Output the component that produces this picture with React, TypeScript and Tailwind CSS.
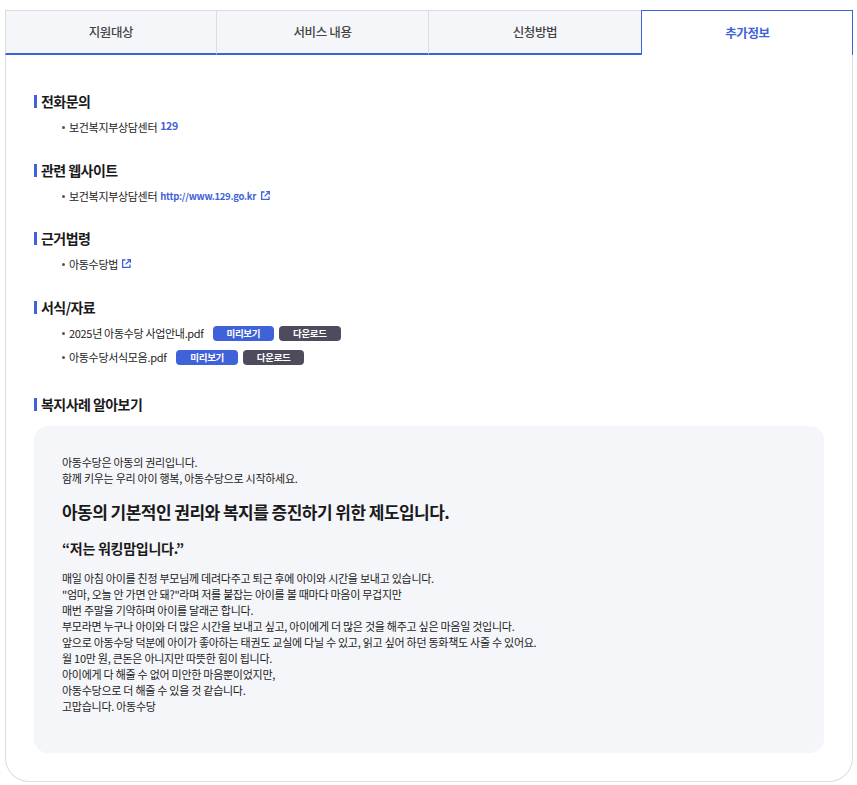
const F = "[font-family:'Noto_Sans_CJK_KR','Noto_Sans',sans-serif]";

function ExtIcon() {
  return (
    <svg width="9" height="9" viewBox="0 0 9 9" fill="none" stroke="#3f62d9" strokeWidth="1.3" className="shrink-0">
      <path d="M3.5 1H.65v7.35H8V5.5" />
      <path d="M3.6 5.4 7.8 1.2" />
      <path d="M5.2.65h3.15V3.8" />
    </svg>
  );
}

function Heading({ children }: { children: React.ReactNode }) {
  return (
    <h3 className="flex items-center gap-[4px] h-[20px] text-[14px] font-semibold tracking-[-0.55px] text-[#1a1a1a]">
      <span className="w-[3px] h-[13px] bg-[#3f62d9]" />
      {children}
    </h3>
  );
}

function Item({ children }: { children: React.ReactNode }) {
  return (
    <li className="flex items-center h-[20px] pl-[28px] text-[11px] tracking-[-0.32px] text-[#222]">
      <span className="w-[3px] h-[3px] rounded-full bg-[#555] mr-[4px] mt-[1px]" />
      {children}
    </li>
  );
}

function Btn({ dark, children }: { dark?: boolean; children: React.ReactNode }) {
  return (
    <span className={`flex items-center justify-center w-[61.5px] h-[15px] rounded-[4px] text-[9.5px] font-semibold tracking-[-0.3px] text-white ${dark ? "bg-[#4d4b5c]" : "bg-[#3f62d9]"}`}>
      {children}
    </span>
  );
}

const story = [
  "매일 아침 아이를 친정 부모님께 데려다주고 퇴근 후에 아이와 시간을 보내고 있습니다.",
  "\"엄마, 오늘 안 가면 안 돼?\"라며 저를 붙잡는 아이를 볼 때마다 마음이 무겁지만",
  "매번 주말을 기약하며 아이를 달래곤 합니다.",
  "부모라면 누구나 아이와 더 많은 시간을 보내고 싶고, 아이에게 더 많은 것을 해주고 싶은 마음일 것입니다.",
  "앞으로 아동수당 덕분에 아이가 좋아하는 태권도 교실에 다닐 수 있고, 읽고 싶어 하던 동화책도 사줄 수 있어요.",
  "월 10만 원, 큰돈은 아니지만 따뜻한 힘이 됩니다.",
  "아이에게 다 해줄 수 없어 미안한 마음뿐이었지만,",
  "아동수당으로 더 해줄 수 있을 것 같습니다.",
  "고맙습니다. 아동수당",
];

const tabs = [
  { t: "지원대상", w: "w-[211px]" },
  { t: "서비스 내용", w: "w-[212px]" },
  { t: "신청방법", w: "w-[213px]" },
];

export default function App() {
  return (
    <div className={`w-[857px] h-[785px] bg-white pt-[10px] pl-[5px] pr-[4px] ${F}`}>
      <div className="h-[772px] flex flex-col border-x border-b border-[#dcdde1] rounded-b-[24px]">
        <div className="flex h-[45px] -mx-px">
          {tabs.map(({ t, w }) => (
            <div key={t} className={`${w} flex items-center justify-center bg-[#f5f6fa] border-t border-l border-[#dcdde1] border-b-2 border-b-[#3f62d9] text-[12.5px] font-medium tracking-[-0.37px] text-[#444]`}>
              {t}
            </div>
          ))}
          <div className="flex-1 flex items-center justify-center pl-[1px] bg-white border border-b-0 border-[#3f62d9] text-[12.5px] font-semibold tracking-[-0.37px] text-[#3f62d9]">
            추가정보
          </div>
        </div>

        <div className="flex-1 pl-[28px] pr-[28px] pt-[36px]">
          <Heading>전화문의</Heading>
          <ul className="mt-[6px]">
            <Item>
              보건복지부상담센터
              <span className="ml-[3px] -mt-[2px] text-[10.5px] font-semibold tracking-[-0.3px] text-[#3f62d9]">129</span>
            </Item>
          </ul>

          <div className="mt-[23px]"><Heading>관련 웹사이트</Heading></div>
          <ul className="mt-[6px]">
            <Item>
              보건복지부상담센터
              <span className="ml-[3px] text-[9.5px] font-semibold tracking-[-0.28px] text-[#3f62d9]">http://www.129.go.kr</span>
              <span className="ml-[5px] -mt-[2px]"><ExtIcon /></span>
            </Item>
          </ul>

          <div className="mt-[22px]"><Heading>근거법령</Heading></div>
          <ul className="mt-[6px]">
            <Item>
              아동수당법
              <span className="ml-[4px] -mt-[2px]"><ExtIcon /></span>
            </Item>
          </ul>

          <div className="mt-[23px]"><Heading>서식/자료</Heading></div>
          <ul className="mt-[6px] flex flex-col gap-[4px]">
            <Item>
              2025년 아동수당 사업안내.pdf
              <span className="flex gap-[5px] ml-[9px]"><Btn>미리보기</Btn><Btn dark>다운로드</Btn></span>
            </Item>
            <Item>
              아동수당서식모음.pdf
              <span className="flex gap-[5px] ml-[10px]"><Btn>미리보기</Btn><Btn dark>다운로드</Btn></span>
            </Item>
          </ul>

          <div className="mt-[27px]"><Heading>복지사례 알아보기</Heading></div>

          <div className="mt-[12px] h-[327px] rounded-[14px] bg-[#f5f6fa] px-[28px] pt-[28px] text-[11px] leading-[16px] tracking-[-0.265px] text-[#222]">
            <p>아동수당은 아동의 권리입니다.<br />함께 키우는 우리 아이 행복, 아동수당으로 시작하세요.</p>
            <p className="mt-[14px] text-[17px] leading-[24px] font-semibold tracking-[-0.54px] text-[#1a1a1a]">아동의 기본적인 권리와 복지를 증진하기 위한 제도입니다.</p>
            <p className="mt-[13px] text-[14px] leading-[22px] font-semibold tracking-[-0.25px] text-[#1a1a1a]">“저는 워킹맘입니다.”</p>
            <p className="mt-[11px]">
              {story.map((l) => (
                <span key={l} className="block">{l}</span>
              ))}
            </p>
          </div>
        </div>
      </div>
    </div>
  );
}
